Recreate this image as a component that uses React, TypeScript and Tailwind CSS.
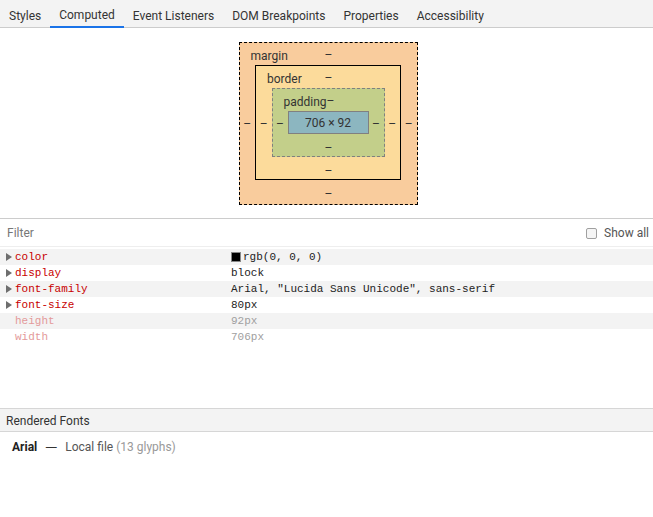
const tabs = ["Styles", "Computed", "Event Listeners", "DOM Breakpoints", "Properties", "Accessibility"];

const props = [
  { name: "color", value: "rgb(0, 0, 0)", swatch: true, expandable: true },
  { name: "display", value: "block", expandable: true },
  { name: "font-family", value: 'Arial, "Lucida Sans Unicode", sans-serif', expandable: true },
  { name: "font-size", value: "80px", expandable: true },
  { name: "height", value: "92px", expandable: false },
  { name: "width", value: "706px", expandable: false },
];

function Dash({ className = "" }: { className?: string }) {
  return <div className={"flex justify-center leading-none " + className}>–</div>;
}

export default function App() {
  return (
    <div className="w-[653px] h-[517px] bg-white text-[12px] text-[#333] overflow-hidden flex flex-col" style={{ fontFamily: 'Roboto, "Noto Sans", sans-serif' }}>
      {/* tabs */}
      <div className="h-[28px] bg-[#f3f3f3] border-b border-[#cccccc] flex shrink-0">
        {tabs.map((t) => (
          <div
            key={t}
            className={
              "px-[9px] h-[28px] flex items-center pt-[3px] -mb-px " +
              (t === "Computed" ? "border-b-2 border-[#1a73e8]" : "")
            }
          >
            {t}
          </div>
        ))}
      </div>

      {/* box model */}
      <div className="h-[191px] flex items-start justify-center pt-[14px] pl-[3px] shrink-0 border-b border-[#cccccc]">
        <div className="relative w-[179px] h-[163px] border border-dashed border-black bg-[#f9cc9d] flex flex-col">
          <span className="absolute left-[11px] top-[4px]">margin</span>
          <Dash className="h-[22px] pt-[6px] pl-[1px]" />
          <div className="flex">
            <Dash className="w-[16px] items-center pt-[3px]" />
            <div className="relative w-[146px] h-[115px] border border-black bg-[#fcdb9b] flex flex-col">
              <span className="absolute left-[11px] top-[4px]">border</span>
              <Dash className="h-[22px] pt-[6px] pl-[1px]" />
              <div className="flex">
                <Dash className="w-[16px] items-center pt-[3px]" />
                <div className="relative w-[113px] h-[69px] border border-dashed border-[#808080] bg-[#c3cf8a] flex flex-col">
                  <span className="absolute left-[11px] top-[4px]">padding</span>
                  <Dash className="h-[22px] pt-[6px] pl-[5px]" />
                  <div className="flex">
                    <Dash className="w-[15px] items-center pt-[3px]" />
                    <div className="w-[81px] h-[23px] border border-[#808080] bg-[#8cb6c0] flex items-center justify-center pt-[1px]">
                      706 × 92
                    </div>
                    <Dash className="w-[15px] items-center pt-[3px]" />
                  </div>
                  <Dash className="h-[22px] pt-[8px] pl-[1px]" />
                </div>
                <Dash className="w-[16px] items-center pt-[3px]" />
              </div>
              <Dash className="h-[22px] pt-[8px] pl-[1px]" />
            </div>
            <Dash className="w-[16px] items-center pt-[3px]" />
          </div>
          <Dash className="h-[22px] pt-[8px] pl-[1px]" />
        </div>
      </div>

      {/* filter */}
      <div className="h-[28px] flex items-center justify-between pl-[7px] pr-[4px] pt-[1px] border-b border-[#eeeeee] shrink-0">
        <span className="text-[#777]">Filter</span>
        <label className="flex items-center gap-[7px] text-[#555]">
          <span className="w-[11px] h-[11px] border border-[#a0a0a0] rounded-[2px] bg-[#f5f5f5]" />
          Show all
        </label>
      </div>

      {/* properties */}
      <div className="h-[161px] pt-[2px] flex flex-col shrink-0" style={{ fontFamily: '"Liberation Mono", "DejaVu Sans Mono", monospace' }}>
        {props.map((p, i) => (
          <div key={p.name} className={"h-[16px] flex items-center text-[11px] " + (i % 2 === 0 ? "bg-[#f3f3f3]" : "bg-white")}>
            <div className="w-[15px] flex justify-center pl-[2px]">
              {p.expandable && (
                <svg width="6" height="8" viewBox="0 0 6 8">
                  <path d="M0 0 L6 4 L0 8 Z" fill="#6e6e6e" />
                </svg>
              )}
            </div>
            <div className={"w-[216px] " + (p.expandable ? "text-[#c80000]" : "text-[#e39a9a]")}>{p.name}</div>
            <div className={"flex items-center " + (p.expandable ? "text-[#222]" : "text-[#a0a0a0]")}>
              {p.swatch && <span className="w-[10px] h-[10px] bg-black border border-[#888] mr-[2px]" />}
              {p.value}
            </div>
          </div>
        ))}
      </div>

      {/* rendered fonts */}
      <div className="h-[24px] bg-[#f3f3f3] border-y border-[#d6d6d6] flex items-center px-[6px] pt-[1px] shrink-0">
        Rendered Fonts
      </div>
      <div className="px-[12px] pt-[6px] flex-1">
        <span className="font-bold text-[#222]">Arial</span>
        <span className="text-[#333] mx-[8px]" style={{ fontFamily: '"DejaVu Sans", sans-serif' }}>—</span>
        <span className="text-[#555]">Local file </span>
        <span className="text-[#999]">(13 glyphs)</span>
      </div>
    </div>
  );
}
